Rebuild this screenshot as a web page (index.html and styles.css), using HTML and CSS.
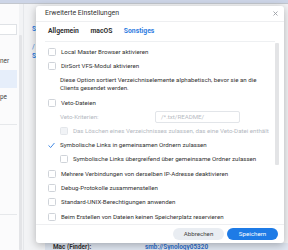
FILE: index.html
```html
<!DOCTYPE html>
<html lang="de">
<head>
<meta charset="utf-8">
<title>Erweiterte Einstellungen</title>
<link rel="stylesheet" href="styles.css">
</head>
<body>
<div class="topbar"></div>
<div class="page">
  <aside class="sidebar">
    <div class="search"></div>
    <div class="side-item first">ner</div>
    <div class="side-item selected"></div>
    <div class="side-item">pe</div>
    <div class="side-sep s1"></div>
    <div class="side-sep s2"></div>
  </aside>
  <div class="side-scroll"></div>
  <main class="content">
    <div class="frag f1">S</div>
    <div class="frag f2">/</div>
    <div class="frag f3">S</div>
    <div class="info">
      <span class="info-label">Mac (Finder):</span>
      <span class="info-value">smb://Synology05320</span>
    </div>
  </main>
</div>

<div class="modal">
  <div class="modal-header">
    <span class="modal-title">Erweiterte Einstellungen</span>
    <svg class="close" width="5" height="5" viewBox="0 0 5 5"><path d="M0.5 0.5L4.5 4.5M4.5 0.5L0.5 4.5" stroke="#9a9ea5" stroke-width="0.9" fill="none"/></svg>
  </div>
  <div class="tabs">
    <span class="tab">Allgemein</span>
    <span class="tab">macOS</span>
    <span class="tab active">Sonstiges</span>
  </div>
  <div class="modal-body">
    <div class="row"><span class="cb"></span><span>Local Master Browser aktivieren</span></div>
    <div class="row"><span class="cb"></span><span>DirSort VFS-Modul aktivieren</span></div>
    <div class="desc">Diese Option sortiert Verzeichniselemente alphabetisch, bevor sie an die<br>Clients gesendet werden.</div>
    <div class="row veto"><span class="cb"></span><span>Veto-Dateien</span></div>
    <div class="row sub crit"><span class="crit-label">Veto-Kriterien:</span><span class="field">/*.txt/README/</span></div>
    <div class="row sub disabled"><span class="cb"></span><span>Das Löschen eines Verzeichnisses zulassen, das eine Veto-Datei enthält</span></div>
    <div class="row"><svg class="check" width="7" height="7" viewBox="0 0 7 7"><path d="M0.8 3.7L2.7 5.5L6.2 1.3" stroke="#2f7de1" stroke-width="0.9" fill="none" stroke-linecap="round" stroke-linejoin="round"/></svg><span>Symbolische Links in gemeinsamen Ordnern zulassen</span></div>
    <div class="row sub"><span class="cb"></span><span>Symbolische Links übergreifend über gemeinsame Ordner zulassen</span></div>
    <div class="row gap1"><span class="cb"></span><span>Mehrere Verbindungen von derselben IP-Adresse deaktivieren</span></div>
    <div class="row"><span class="cb"></span><span>Debug-Protokolle zusammenstellen</span></div>
    <div class="row"><span class="cb"></span><span>Standard-UNIX-Berechtigungen anwenden</span></div>
    <div class="row gap1"><span class="cb"></span><span>Beim Erstellen von Dateien keinen Speicherplatz reservieren</span></div>
    <div class="vscroll"></div>
  </div>
  <div class="modal-footer">
    <button class="btn cancel">Abbrechen</button>
    <button class="btn primary">Speichern</button>
  </div>
</div>
</body>
</html>
```
FILE: styles.css
```css
html, body {
  margin: 0;
  padding: 0;
  width: 288px;
  height: 250px;
  overflow: hidden;
}
body {
  position: relative;
  font-family: Roboto, "Noto Sans", "Liberation Sans", sans-serif;
  font-size: 6.15px;
  color: #333;
  background: #f2f3f5;
}
.topbar {
  height: 3px;
  background: #cdd5e7;
  border-bottom: 1px solid #c3c7ce;
}
.page {
  display: flex;
  height: 246px;
}
.sidebar {
  position: relative;
  width: 19px;
  background: #fbfbfc;
  display: flex;
  flex-direction: column;
}
.search {
  margin-top: 20px;
  width: 16px;
  height: 9px;
  border: 1px solid #dfe2e6;
  border-left: none;
  background: #fff;
}
.side-item {
  height: 18px;
  line-height: 18px;
  font-size: 6.4px;
  color: #444;
  white-space: nowrap;
  overflow: hidden;
}
.side-item.first {
  margin-top: 17px;
}
.side-item.selected {
  background: #e6eefa;
  width: 17px;
}
.side-sep {
  position: absolute;
  left: 0;
  width: 17px;
  border-top: 1px solid #e6e8eb;
}
.s1 { top: 120px; }
.s2 { top: 210px; }
.side-scroll {
  width: 3px;
  margin-top: 31px;
  background: #e3e4e7;
  border-radius: 1px;
}
.content {
  flex: 1;
  border-left: 1px solid #e5e7ea;
  margin-left: 1px;
  display: flex;
  flex-direction: column;
  padding-left: 8px;
}
.frag {
  color: #2f7de1;
  font-weight: bold;
  font-size: 6.4px;
  height: 9px;
  line-height: 9px;
}
.f1 { margin-top: 21px; }
.f2 { margin-top: 9px; font-weight: normal; }
.f3 { margin-top: 0px; }
.info {
  margin-top: auto;
  margin-left: 13px;
  height: 6px;
  background: #dfe6f1;
  padding-left: 8px;
  padding-top: 1px;
  display: flex;
  font-size: 6.4px;
  line-height: 6px;
  white-space: nowrap;
}
.info-label {
  font-weight: bold;
  color: #333;
  width: 92px;
}
.info-value {
  color: #2f6fc9;
  font-weight: bold;
}

/* modal */
.modal {
  position: absolute;
  left: 36px;
  top: 6px;
  width: 248px;
  height: 237px;
  background: #fff;
  border-radius: 3px;
  box-shadow: 0 2px 8px rgba(0, 0, 0, 0.28);
  display: flex;
  flex-direction: column;
}
.modal-header {
  height: 15px;
  border-bottom: 1px solid #eeeff1;
  display: flex;
  align-items: center;
  justify-content: space-between;
  padding: 0 6px 0 9px;
}
.modal-title {
  color: #333;
  font-size: 6.9px;
}
.close {
  display: block;
  margin-top: 1px;
}
.tabs {
  height: 19px;
  margin: 0 9px 0 9px;
  padding-left: 3px;
  border-bottom: 1px solid #eef0f2;
  display: flex;
  align-items: center;
  gap: 11.5px;
}
.tab {
  font-weight: bold;
  color: #333;
  font-size: 6.8px;
}
.tab.active {
  color: #2f7de1;
}
.modal-body {
  position: relative;
  flex: 1;
  padding: 3px 0 0 12px;
}
.row {
  height: 14px;
  display: flex;
  align-items: center;
  gap: 5px;
  white-space: nowrap;
}
.row.sub {
  padding-left: 12px;
}
.row.gap1 {
  margin-top: 1px;
}
.cb {
  width: 6px;
  height: 6px;
  border: 0.7px solid #cfd3d9;
  border-radius: 1.5px;
  background: #fff;
  flex: none;
}
.check {
  display: block;
  flex: none;
}
.desc {
  margin: 3px 0 3.5px 12px;
  line-height: 8.3px;
  color: #333;
  white-space: nowrap;
}
.crit {
  gap: 0;
}
.crit-label {
  width: 95px;
  color: #b4b9c1;
}
.field {
  width: 78px;
  height: 10px;
  border: 0.7px solid #e2e5e9;
  border-radius: 2px;
  padding-left: 5px;
  line-height: 10px;
  color: #b8bcc3;
}
.disabled {
  color: #b4b9c1;
}
.disabled .cb {
  background: #f1f3f6;
  border-color: #e3e6ea;
}
.vscroll {
  position: absolute;
  left: 239px;
  top: 1px;
  width: 4px;
  height: 122px;
  background: #e3e4e6;
  border-radius: 1px;
}
.modal-footer {
  height: 18px;
  border-top: 1px solid #eeeff1;
  display: flex;
  align-items: center;
  justify-content: flex-end;
  gap: 3px;
  padding-right: 6px;
}
.btn {
  width: 51px;
  height: 12px;
  border: none;
  border-radius: 6px;
  font-family: Roboto, "Noto Sans", "Liberation Sans", sans-serif;
  font-size: 6.2px;
  padding: 0;
  margin: 0;
}
.btn.cancel {
  background: #e9edf2;
  color: #444;
}
.btn.primary {
  background: #1e7be6;
  color: #fff;
}
```
